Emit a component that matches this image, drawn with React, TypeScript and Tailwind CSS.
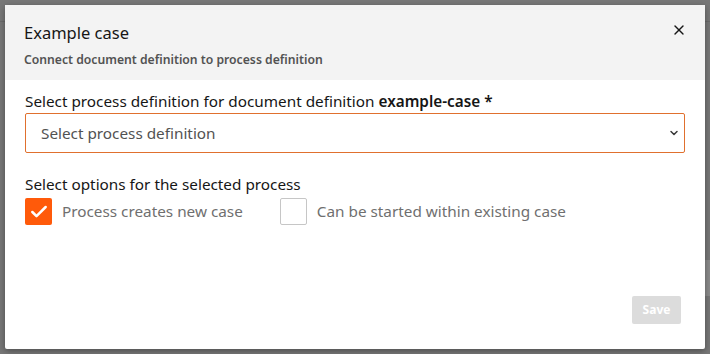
import { X, ChevronDown, Check } from "lucide-react";

export default function App() {
  return (
    <div
      className="relative h-[354px] w-[710px] overflow-hidden bg-[#777777] p-[5px]"
      style={{ fontFamily: '"Noto Sans", sans-serif' }}
    >
      {/* blurred page behind the overlay */}
      <div className="absolute left-0 right-0 top-[21px] h-px bg-[#6a6a6a]" />
      <div className="absolute right-0 top-[260px] h-[36px] w-[8px] bg-[#8a8a8a]" />

      <div className="relative flex h-[344px] w-[700px] flex-col rounded-[2px] bg-white shadow-[0_2px_6px_rgba(0,0,0,0.35)]">
        <div className="relative h-[75px] bg-[#f3f3f3] px-[19px] pt-[16px]">
          <div className="text-[16.5px] leading-[24px] text-[#161616]">Example case</div>
          <div className="mt-[7px] text-[12.2px] font-semibold leading-[16px] text-[#525252]">
            Connect document definition to process definition
          </div>
          <button className="absolute right-[18px] top-[17px] text-[#161616]">
            <X size={16} strokeWidth={2} />
          </button>
        </div>

        <div className="flex flex-1 flex-col px-[20px] pt-[11px]">
          <label className="text-[15.3px] leading-[20px] text-[#161616]">
            Select process definition for document definition{" "}
            <span className="font-semibold">example-case *</span>
          </label>
          <div className="mt-[2px] flex h-[40px] items-center justify-between rounded-[2px] border border-[#e0702e] pl-[15px] pr-[4px]">
            <span className="text-[15.3px] text-[#525252]">Select process definition</span>
            <ChevronDown size={12} strokeWidth={3} className="text-[#393939]" />
          </div>

          <div className="mt-[21px] text-[15.3px] leading-[20px] text-[#161616]">
            Select options for the selected process
          </div>
          <div className="mt-[4px] flex items-center">
            <div className="flex h-[27px] w-[27px] items-center justify-center rounded-[2px] bg-[#ff5a0a]">
              <Check size={20} strokeWidth={3} className="text-white" />
            </div>
            <span className="ml-[10px] text-[15.3px] text-[#6f6f6f]">Process creates new case</span>
            <div className="ml-[37px] h-[27px] w-[27px] rounded-[2px] border border-[#c6c6c6] bg-white" />
            <span className="ml-[10px] text-[15.3px] text-[#6f6f6f]">Can be started within existing case</span>
          </div>

          <div className="mt-auto mb-[25px] flex justify-end pr-[4px]">
            <button className="h-[28px] w-[49px] rounded-[2px] bg-[#dcdcdc] text-[12px] font-bold text-white">
              Save
            </button>
          </div>
        </div>
      </div>
    </div>
  );
}
